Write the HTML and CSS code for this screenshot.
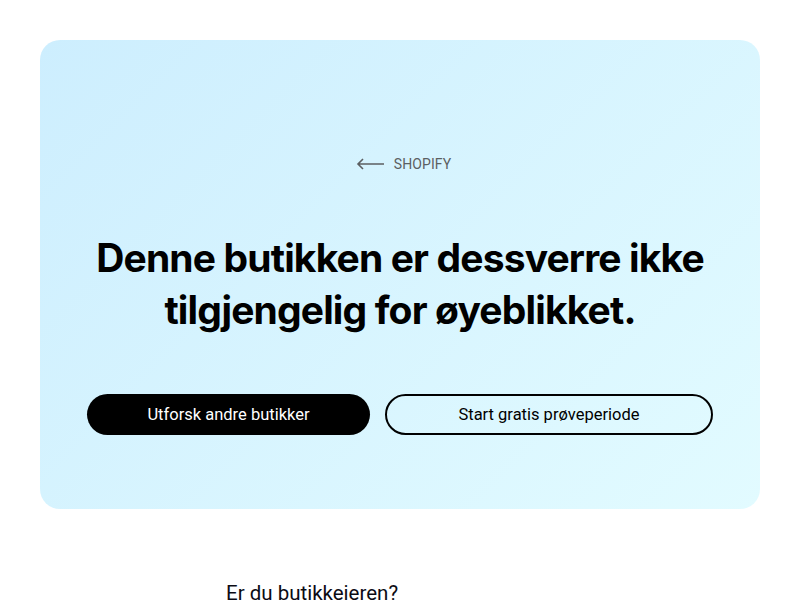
FILE: index.html
```html
<!DOCTYPE html>
<html lang="no">
<head>
<meta charset="utf-8">
<link rel="stylesheet" href="styles.css">
</head>
<body>
<main class="page">
  <section class="card">
    <a class="back" href="#">
      <svg class="arrow" width="29" height="12" viewBox="0 0 29 12" aria-hidden="true">
        <path d="M28 6H2M7 1L2 6l5 5" fill="none" stroke="#5c5f62" stroke-width="1.6"/>
      </svg>
      <span>SHOPIFY</span>
    </a>
    <h1 class="title">Denne butikken er dessverre ikke tilgjengelig for øyeblikket.</h1>
    <div class="actions">
      <a class="btn btn-dark" href="#">Utforsk andre butikker</a>
      <a class="btn btn-outline" href="#">Start gratis prøveperiode</a>
    </div>
  </section>
  <section class="owner">
    <h2 class="owner-title">Er du butikkeieren?</h2>
  </section>
</main>
</body>
</html>
```
FILE: styles.css
```css
html, body {
  margin: 0;
  padding: 0;
  background: #ffffff;
}
body {
  font-family: Roboto, "Liberation Sans", sans-serif;
  color: #000;
  overflow: hidden;
}
.page {
  padding: 40px 40px 0;
}
.card {
  height: 469px;
  box-sizing: border-box;
  border-radius: 20px;
  background: linear-gradient(135deg, #cdeefe 0%, #e2fbff 100%);
  display: flex;
  flex-direction: column;
  align-items: center;
  padding-top: 115px;
}
.back {
  display: flex;
  align-items: center;
  gap: 9px;
  color: #5c5f62;
  text-decoration: none;
  font-size: 14px;
  letter-spacing: 0.1px;
  height: 18px;
  margin-left: 7px;
}
.arrow {
  display: block;
}
.title {
  margin: 59px 0 0;
  width: 660px;
  text-align: center;
  font-family: Inter, "Liberation Sans", sans-serif;
  font-weight: 700;
  font-size: 39px;
  line-height: 52px;
  letter-spacing: -0.85px;
}
.actions {
  display: flex;
  gap: 15px;
  margin-top: 58px;
}
.btn {
  display: flex;
  align-items: center;
  justify-content: center;
  box-sizing: border-box;
  height: 41px;
  border-radius: 21px;
  font-size: 16.5px;
  text-decoration: none;
}
.btn-dark {
  width: 283px;
  background: #000;
  color: #fff;
}
.btn-outline {
  width: 328px;
  border: 2px solid #000;
  color: #000;
  background: transparent;
}
.owner {
  padding: 72px 0 0 186px;
}
.owner-title {
  margin: 0;
  font-size: 20.5px;
  font-weight: 400;
  color: #0b0b14;
}
```
